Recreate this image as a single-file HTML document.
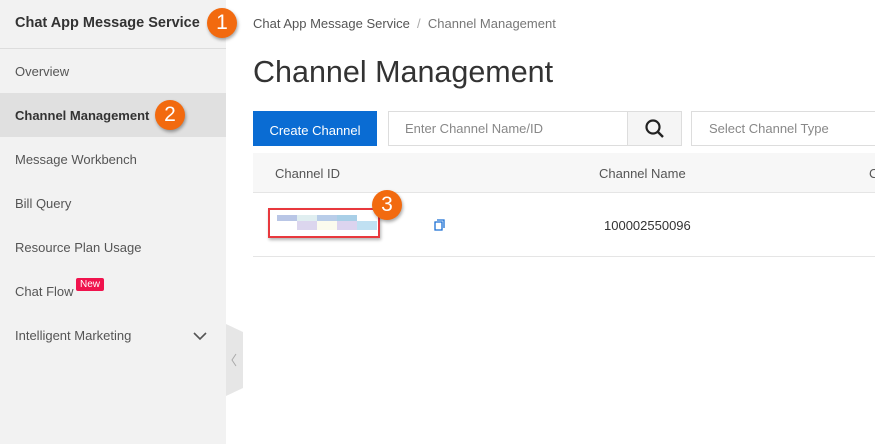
<!DOCTYPE html>
<html><head><style>
*{margin:0;padding:0;box-sizing:border-box}
body{width:875px;height:444px;overflow:hidden;background:#fff;font-family:"Liberation Sans",sans-serif;position:relative;color:#333}
.a{position:absolute}
.side{left:0;top:0;width:226px;height:444px;background:#f2f2f2}
.nav{left:15px;font-size:13px;color:#555}
.badge{width:30px;height:30px;border-radius:50%;background:#f26a0f;color:#fff;font-size:21px;text-align:center;line-height:30px;box-shadow:1px 2px 3px rgba(0,0,0,.35)}
</style></head><body>
<div class="a side"></div>
<div class="a" style="left:15px;top:15px;font-size:14.5px;font-weight:bold;color:#333">Chat App Message Service</div>
<div class="a badge" style="left:207px;top:8px">1</div>
<div class="a" style="left:0;top:48px;width:226px;height:1px;background:#ddd"></div>
<div class="a nav" style="top:64px">Overview</div>
<div class="a" style="left:0;top:93px;width:226px;height:44px;background:#e0e0e0"></div>
<div class="a nav" style="top:108px;color:#333;font-weight:bold">Channel Management</div>
<div class="a badge" style="left:155px;top:100px">2</div>
<div class="a nav" style="top:152px">Message Workbench</div>
<div class="a nav" style="top:196px">Bill Query</div>
<div class="a nav" style="top:240px">Resource Plan Usage</div>
<div class="a nav" style="top:284px">Chat Flow</div>
<div class="a" style="left:76px;top:278px;background:#f0134d;color:#fff;font-size:10px;padding:1px 4px;border-radius:2px">New</div>
<div class="a nav" style="top:328px">Intelligent Marketing</div>
<svg class="a" style="left:193px;top:331px" width="14" height="10"><path d="M1 2l6 6 6-6" stroke="#555" stroke-width="1.6" fill="none"/></svg>
<svg class="a" style="left:226px;top:324px" width="18" height="72"><path d="M0 0L17 8V64L0 72Z" fill="#e6e6e6"/><path d="M10 30l-4 6 4 6" stroke="#aaa" fill="none"/></svg>
<div class="a" style="left:253px;top:16px;font-size:13px;color:#555">Chat App Message Service &nbsp;<span style="color:#aaa">/</span>&nbsp; <span style="color:#777">Channel Management</span></div>
<div class="a" style="left:253px;top:55px;font-size:30.5px;color:#333">Channel Management</div>
<div class="a" style="left:253px;top:111px;width:124px;height:35px;background:#0a6cd3;color:#fff;font-size:13px;text-align:center;line-height:40px">Create Channel</div>
<div class="a" style="left:388px;top:111px;width:294px;height:35px;border:1px solid #ddd"></div>
<div class="a" style="left:627px;top:111px;width:55px;height:35px;border:1px solid #ddd;background:#f5f5f5"></div>
<svg class="a" style="left:644px;top:118px" width="22" height="22"><circle cx="9" cy="9" r="6.5" stroke="#222" stroke-width="2.2" fill="none"/><path d="M14 14l5 5" stroke="#222" stroke-width="2.4"/></svg>
<div class="a" style="left:405px;top:121px;font-size:13px;color:#888">Enter Channel Name/ID</div>
<div class="a" style="left:691px;top:111px;width:200px;height:35px;border:1px solid #ddd"></div>
<div class="a" style="left:709px;top:121px;font-size:13px;color:#888">Select Channel Type</div>
<div class="a" style="left:253px;top:153px;width:622px;height:40px;background:#f7f7f7;border-bottom:1px solid #e5e5e5"></div>
<div class="a" style="left:275px;top:166px;font-size:13px;color:#555">Channel ID</div>
<div class="a" style="left:599px;top:166px;font-size:13px;color:#555">Channel Name</div>
<div class="a" style="left:869px;top:166px;font-size:13px;color:#555">C</div>
<div class="a" style="left:253px;top:256px;width:622px;height:1px;background:#e5e5e5"></div>
<div class="a" style="left:268px;top:208px;width:112px;height:30px;border:2px solid #e8383d;box-shadow:1px 2px 3px rgba(0,0,0,.3);background:#fff"></div>
<div class="a" style="left:277px;top:215px;width:80px;height:6px;background:linear-gradient(90deg,#b9c6e6 0 25%,#e0eef0 25% 50%,#b9cde9 50% 75%,#a9cfe7 75%)"></div>
<div class="a" style="left:297px;top:221px;width:80px;height:9px;background:linear-gradient(90deg,#dcd6ee 0 25%,#fbfbee 25% 50%,#dcd4ef 50% 75%,#c0e0f2 75%)"></div>
<div class="a badge" style="left:372px;top:190px">3</div>
<svg class="a" style="left:433px;top:219px" width="12" height="13"><path d="M2 3h7v8H2z M4 1h7v8" stroke="#1a6fd4" stroke-width="1.3" fill="none"/></svg>
<div class="a" style="left:604px;top:218px;font-size:13px;color:#333">100002550096</div>
</body></html>
